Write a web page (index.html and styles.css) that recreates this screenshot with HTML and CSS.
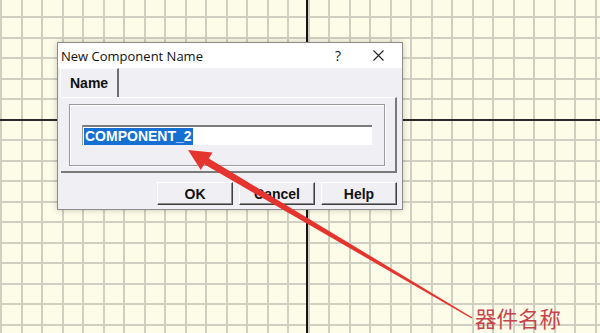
FILE: index.html
```html
<!DOCTYPE html>
<html lang="zh">
<head>
  <meta charset="UTF-8">
  <title>New Component Name</title>
  <link rel="stylesheet" href="styles.css">
</head>
<body>
  <div class="canvas">
    <div class="dialog">
      <div class="titlebar">
        <span class="title">New Component Name</span>
        <span class="help-btn">?</span>
        <span class="close-btn">
          <svg width="11" height="11" viewBox="0 0 11 11"><path d="M0.5 0.5 L10.5 10.5 M10.5 0.5 L0.5 10.5" stroke="#222" stroke-width="1.1" fill="none"/></svg>
        </span>
      </div>
      <div class="tabs">
        <div class="tab">Name</div>
      </div>
      <div class="panel">
        <div class="group">
          <div class="field"><span class="sel">COMPONENT_2</span></div>
        </div>
      </div>
      <div class="buttons">
        <button>OK</button>
        <button>Cancel</button>
        <button>Help</button>
      </div>
    </div>

    <!-- red pointer drawn over the dialog -->
    <svg class="arrow" width="600" height="333" viewBox="0 0 600 333">
      <polygon fill="#e5342e" points="188,150 212.5,152.4 208.8,158.4 472.4,317.5 471.6,318.5 204.2,164.3 200.8,170.1"/>
    </svg>
    <div class="label">器件名称</div>
  </div>
</body>
</html>
```

FILE: styles.css
```css
* {
  margin: 0;
  padding: 0;
  box-sizing: border-box;
}
body {
  width: 600px;
  height: 333px;
  overflow: hidden;
  font-family: 'Liberation Sans', Arial, sans-serif;
}
.canvas {
  position: relative;
  width: 600px;
  height: 333px;
  background-color: #fdfce9;
  background-image:
    linear-gradient(90deg, transparent 306px, #151515 306px, #151515 308px, transparent 308px),
    linear-gradient(180deg, transparent 119px, #2a2a28 119px, #2a2a28 121px, transparent 121px),
    repeating-linear-gradient(90deg, #d1cfc1 0, #d1cfc1 2px, transparent 2px, transparent 20.5px),
    repeating-linear-gradient(180deg, transparent 0, transparent 16px, #d1cfc1 16px, #d1cfc1 18px, transparent 18px, transparent 20.5px);
}
.dialog {
  position: absolute;
  left: 57px;
  top: 42px;
  width: 346px;
  height: 168px;
  background: #f0eff3;
  border: 1px solid #8c8c8c;
  box-shadow: 0 0 6px rgba(0, 0, 0, 0.22);
}
.titlebar {
  height: 25px;
  background: #ffffff;
  display: flex;
  align-items: center;
  font-family: 'Open Sans', 'Noto Sans', sans-serif;
  font-size: 13px;
  color: #111;
}
.title {
  flex: 1;
  padding-left: 3px;
}
.help-btn {
  width: 20px;
  text-align: center;
  margin-right: 25px;
  font-size: 14px;
}
.close-btn {
  width: 11px;
  height: 11px;
  margin-right: 18px;
  display: flex;
}
.tabs {
  height: 29px;
  padding-left: 2px;
  display: flex;
}
.tab {
  width: 59px;
  height: 29px;
  border-top: 1px solid #ffffff;
  border-left: 1px solid #ffffff;
  border-right: 2px solid #6e6e6e;
  padding: 6px 0 0 9px;
  font-weight: bold;
  font-size: 14px;
  color: #111;
}
.panel {
  margin: 0 5px 0 3px;
  height: 76px;
  border-top: 1px solid #ffffff;
  border-right: 2px solid #7a7a7a;
  border-bottom: 2px solid #7a7a7a;
  padding: 6px 10px 0 8px;
}
.group {
  height: 62px;
  border: 1px solid #9a9a9a;
  box-shadow: inset 1px 1px 0 #ffffff, 1px 1px 0 #ffffff;
  padding: 20px 13px 0 12px;
}
.field {
  height: 20px;
  width: 290px;
  background: #ffffff;
  border-top: 2px solid #7c7c7c;
  border-left: 1px solid #9c9c9c;
  padding: 1px 0 0 1px;
  display: flex;
}
.sel {
  background: #1570d2;
  color: #ffffff;
  font-weight: bold;
  font-size: 14px;
  line-height: 16px;
  padding: 0 1px;
}
.buttons {
  display: flex;
  justify-content: flex-end;
  gap: 6px;
  padding-right: 5px;
  margin-top: 9px;
}
button {
  width: 76px;
  height: 23px;
  background: #f0eff3;
  border: 1px solid;
  border-color: #ffffff #404040 #404040 #ffffff;
  box-shadow: inset -1px -1px 0 #8a8a8a;
  font-family: 'Liberation Sans', Arial, sans-serif;
  font-weight: bold;
  font-size: 14px;
  color: #111;
}
.arrow {
  position: absolute;
  left: 0;
  top: 0;
}
.label {
  position: absolute;
  left: 475px;
  top: 306px;
  font-family: 'Noto Sans CJK SC', sans-serif;
  font-size: 21.5px;
  line-height: 24px;
  color: #c7434a;
}
```
